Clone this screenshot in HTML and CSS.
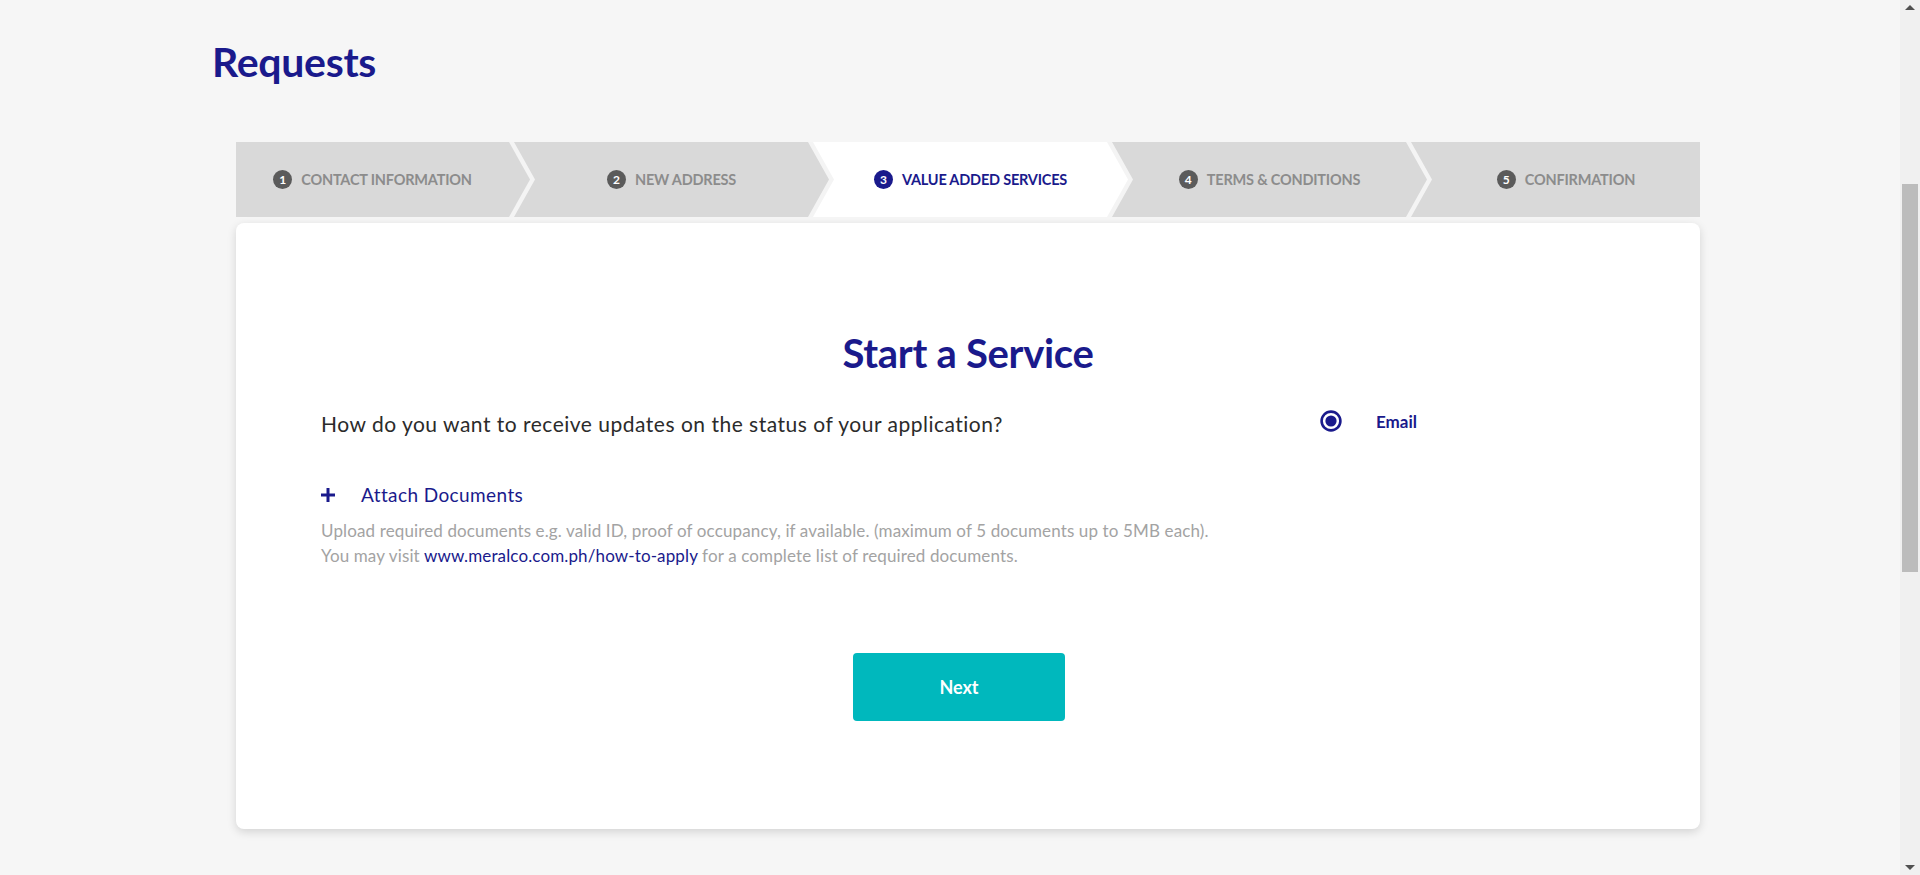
FILE: index.html
```html
<!DOCTYPE html>
<html lang="en">
<head>
<meta charset="utf-8">
<title>Requests</title>
<link rel="stylesheet" href="styles.css">
</head>
<body>
<div class="page">
  <h1 class="page-title">Requests</h1>

  <ol class="stepper">
    <li class="step step-first"><span class="badge">1</span><span class="step-label">Contact Information</span></li>
    <li class="step step-mid"><span class="badge">2</span><span class="step-label">New Address</span></li>
    <li class="step step-mid step-active"><span class="badge">3</span><span class="step-label">Value Added Services</span></li>
    <li class="step step-mid"><span class="badge">4</span><span class="step-label">Terms &amp; Conditions</span></li>
    <li class="step step-last"><span class="badge">5</span><span class="step-label">Confirmation</span></li>
  </ol>

  <section class="card">
    <h2 class="card-title">Start a Service</h2>
    <div class="card-body">
      <div class="question-row">
        <p class="question">How do you want to receive updates on the status of your application?</p>
        <label class="radio-option">
          <svg class="radio-icon" width="22" height="22" viewBox="0 0 22 22" aria-hidden="true">
            <circle cx="11" cy="11" r="9.4" fill="none" stroke="#1a1a8c" stroke-width="2.6"/>
            <circle cx="11" cy="11" r="5.6" fill="#1a1a8c"/>
          </svg>
          <span class="radio-label">Email</span>
        </label>
      </div>

      <div class="attach">
        <svg class="plus-icon" width="14" height="14" viewBox="0 0 14 14" aria-hidden="true">
          <rect x="5.5" y="0" width="3" height="14" fill="#1a1a8c"/>
          <rect x="0" y="5.5" width="14" height="3" fill="#1a1a8c"/>
        </svg>
        <span class="attach-label">Attach Documents</span>
      </div>
      <p class="help">Upload required documents e.g. valid ID, proof of occupancy, if available. (maximum of 5 documents up to 5MB each).<br>You may visit <a class="help-link" href="#">www.meralco.com.ph/how-to-apply</a> for a complete list of required documents.</p>

      <div class="actions">
        <button class="btn-next" type="button">Next</button>
      </div>
    </div>
  </section>
</div>

<div class="scrollbar" aria-hidden="true">
  <span class="sb-arrow sb-up"></span>
  <span class="sb-track"><span class="sb-thumb"></span></span>
  <span class="sb-arrow sb-down"></span>
</div>
</body>
</html>
```

FILE: styles.css
```css
* { box-sizing: border-box; }

html, body {
  margin: 0;
  height: 875px;
  overflow: hidden;
}

body {
  display: flex;
  background: #f6f6f6;
  font-family: "Lato", "Liberation Sans", sans-serif;
  color: #333;
}

.page {
  flex: 1;
  padding-left: 212px;
  padding-top: 38px;
}

.page-title {
  margin: 0;
  font-size: 41px;
  line-height: 48px;
  font-weight: 700;
  color: #1a1a8c;
  letter-spacing: -0.3px;
}

/* Stepper */
.stepper {
  list-style: none;
  margin: 56px 0 0 24px;
  padding: 0;
  width: 1464px;
  height: 75px;
  display: flex;
  background: #f4f4f4;
}

.step {
  height: 75px;
  display: flex;
  align-items: center;
  justify-content: center;
  gap: 9px;
  background: #d9d9d9;
  padding: 0 21px;
  color: #8c8c8c;
}

.step-first {
  flex: 0 0 294px;
  padding-left: 0;
  clip-path: polygon(0 0, calc(100% - 21px) 0, 100% 50%, calc(100% - 21px) 100%, 0 100%);
}

.step-mid {
  flex: 0 0 315px;
  margin-left: -16px;
  clip-path: polygon(0 0, calc(100% - 21px) 0, 100% 50%, calc(100% - 21px) 100%, 0 100%, 21px 50%);
}

.step-last {
  flex: 1;
  margin-left: -16px;
  padding-right: 0;
  clip-path: polygon(0 0, 100% 0, 100% 100%, 0 100%, 21px 50%);
}

.step-active {
  background: #ffffff;
  color: #1a1a8c;
}

.badge {
  width: 19px;
  height: 19px;
  border-radius: 50%;
  background: #5b5b5b;
  color: #fff;
  font-size: 12px;
  font-weight: 700;
  display: flex;
  align-items: center;
  justify-content: center;
  line-height: 1;
}

.step-active .badge { background: #1a1a8c; }

.step-label {
  font-size: 14.5px;
  font-weight: 700;
  text-transform: uppercase;
  letter-spacing: -0.2px;
}

/* Card */
.card {
  margin: 6px 0 0 24px;
  width: 1464px;
  height: 606px;
  background: #fff;
  border-radius: 8px;
  box-shadow: 0 3px 10px rgba(0, 0, 0, 0.14);
  padding-top: 105px;
}

.card-title {
  margin: 0;
  text-align: center;
  font-size: 40px;
  line-height: 50px;
  font-weight: 700;
  color: #1a1a8c;
  letter-spacing: -0.3px;
}

.card-body {
  padding: 0 103px 0 85px;
}

.question-row {
  display: flex;
  align-items: center;
  margin-top: 32px;
  height: 28px;
}

.question {
  margin: 0;
  width: 999px;
  font-size: 21px;
  line-height: 28px;
  letter-spacing: 0.5px;
  color: #2b2b2b;
}

.radio-option {
  display: flex;
  align-items: center;
  gap: 34px;
  margin-top: -6px;
}

.radio-icon { display: block; }

.radio-label {
  font-size: 17px;
  font-weight: 700;
  color: #1a1a8c;
}

.attach {
  display: flex;
  align-items: center;
  gap: 26px;
  margin-top: 45px;
  height: 24px;
}

.plus-icon { display: block; }

.attach-label {
  font-size: 19px;
  line-height: 24px;
  letter-spacing: 0.4px;
  color: #1a1a8c;
}

.help {
  margin: 11px 0 0;
  font-size: 17px;
  line-height: 25px;
  letter-spacing: 0.13px;
  color: #a3a3a3;
}

.help-link {
  color: #1a1a8c;
  text-decoration: none;
}

.actions {
  display: flex;
  justify-content: center;
  margin-top: 85px;
}

.btn-next {
  width: 212px;
  height: 68px;
  border: 0;
  border-radius: 4px;
  background: #00b8bd;
  color: #fff;
  font-family: "Lato", "Liberation Sans", sans-serif;
  font-size: 18px;
  font-weight: 700;
}

/* Fake browser scrollbar */
.scrollbar {
  width: 20px;
  height: 875px;
  background: #f0f0f0;
  display: flex;
  flex-direction: column;
  align-items: center;
}

.sb-arrow {
  width: 0;
  height: 0;
  border-left: 5px solid transparent;
  border-right: 5px solid transparent;
}

.sb-up {
  margin-top: 5px;
  border-bottom: 5px solid #505050;
}

.sb-down {
  margin-bottom: 5px;
  border-top: 5px solid #505050;
}

.sb-track {
  flex: 1;
  width: 100%;
  padding: 0 2px;
}

.sb-thumb {
  display: block;
  margin-top: 174px;
  height: 388px;
  background: #bcbcbc;
}
```
